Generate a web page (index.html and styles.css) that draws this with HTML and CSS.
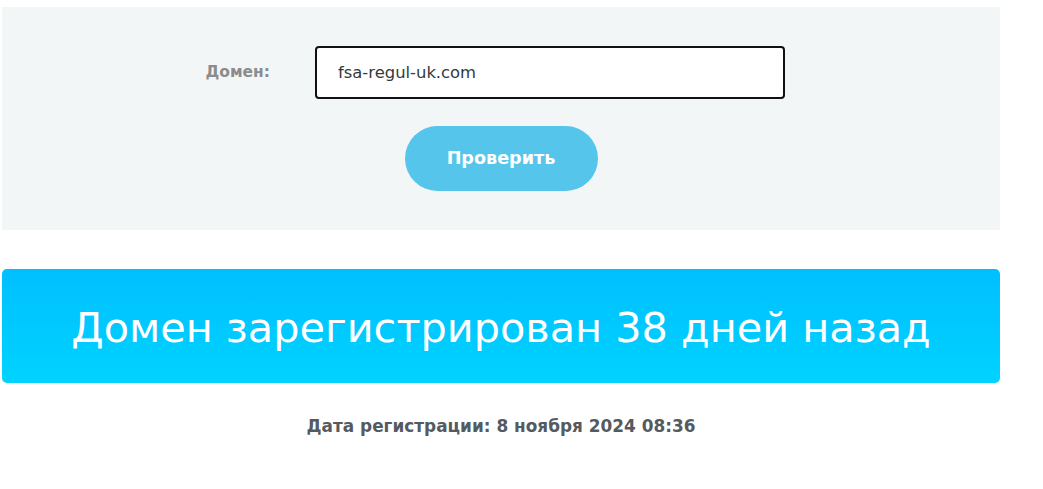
FILE: index.html
```html
<!DOCTYPE html>
<html lang="ru">
<head>
<meta charset="utf-8">
<title>Проверка домена</title>
<link rel="stylesheet" href="styles.css">
</head>
<body>
<div class="page">
  <section class="panel">
    <form class="form">
      <div class="row">
        <label class="label" for="domain">Домен:</label>
        <input class="input" id="domain" type="text" value="fsa-regul-uk.com">
      </div>
      <div class="actions">
        <button class="btn" type="button">Проверить</button>
      </div>
    </form>
  </section>
  <div class="banner">Домен зарегистрирован 38 дней назад</div>
  <p class="date">Дата регистрации: 8 ноября 2024 08:36</p>
</div>
</body>
</html>
```
FILE: styles.css
```css
html, body {
  margin: 0;
  padding: 0;
  background: #ffffff;
}
.page {
  width: 998px;
  margin-left: 2px;
  padding-top: 7px;
  font-family: "DejaVu Sans", sans-serif;
}
.panel {
  background: #f3f6f7;
  padding: 39px 0 39px;
}
.row {
  display: grid;
  grid-template-columns: 268px 470px;
  column-gap: 45px;
  align-items: start;
}
.label {
  text-align: right;
  font-weight: 700;
  font-size: 15.5px;
  color: #8c8c8c;
  padding-top: 16px;
  line-height: 20px;
}
.input {
  box-sizing: border-box;
  width: 470px;
  height: 53px;
  border: 2px solid #111;
  border-radius: 4px;
  padding: 0 21px;
  font-family: "DejaVu Sans", sans-serif;
  font-size: 16.4px;
  color: #333a40;
  background: #fff;
  outline: none;
}
.actions {
  display: flex;
  justify-content: center;
  margin-top: 27px;
}
.btn {
  width: 193px;
  height: 65px;
  border: 0;
  border-radius: 33px;
  background: #55c5ec;
  color: #fff;
  font-family: "DejaVu Sans", sans-serif;
  font-weight: 700;
  font-size: 17.6px;
  padding: 0 0 2px;
  cursor: pointer;
}
.banner {
  margin-top: 39px;
  height: 114px;
  border-radius: 5px;
  background: linear-gradient(180deg, #00bfff 0%, #00d3ff 100%);
  color: #fff;
  display: flex;
  align-items: center;
  justify-content: center;
  font-size: 41.4px;
  font-weight: 400;
  padding-top: 3px;
  box-sizing: border-box;
}
.date {
  margin: 33px 0 0;
  text-align: center;
  font-weight: 700;
  font-size: 16.9px;
  color: #555a60;
}
```
